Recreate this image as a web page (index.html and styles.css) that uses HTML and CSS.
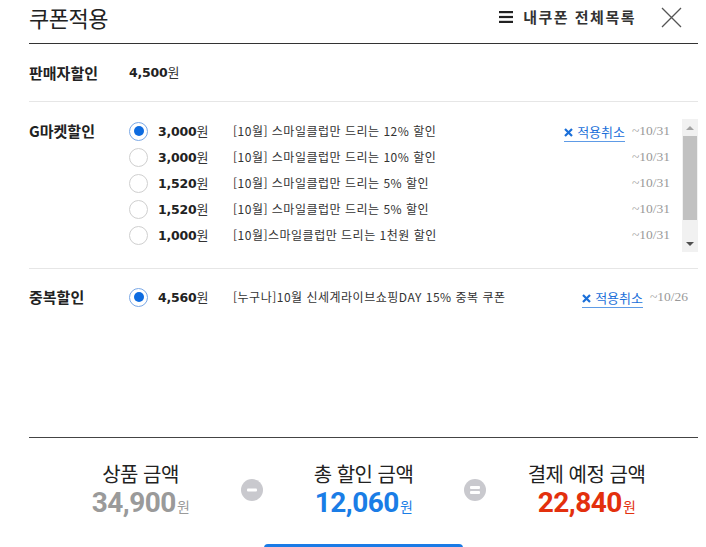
FILE: index.html
```html
<!DOCTYPE html>
<html lang="ko">
<head>
<meta charset="UTF-8">
<title>쿠폰적용</title>
<link rel="stylesheet" href="styles.css">
</head>
<body>
<div class="popup">

	<!-- 헤더 -->
	<div class="header">
		<h1 class="title">쿠폰적용</h1>
		<a class="my-coupons" href="#">
			<svg class="menu-icon" width="14" height="12" viewBox="0 0 14 12"><rect x="0" y="0" width="14" height="2.2" fill="#222"/><rect x="0" y="4.9" width="14" height="2.2" fill="#222"/><rect x="0" y="9.8" width="14" height="2.2" fill="#222"/></svg>
			내쿠폰 전체목록
		</a>
		<button class="close" type="button">
			<svg width="21" height="21" viewBox="0 0 21 21"><path d="M1 1 L20 20 M20 1 L1 20" stroke="#555" stroke-width="1.3" fill="none"/></svg>
		</button>
	</div>

	<!-- 판매자할인 -->
	<div class="row seller">
		<div class="label">판매자할인</div>
		<div class="amount"><b>4,500</b>원</div>
	</div>

	<!-- G마켓할인 -->
	<div class="row gmarket">
		<div class="label">G마켓할인</div>
		<div class="list-wrap">
			<ul class="coupons">
				<li class="coupon">
					<span class="radio checked"></span>
					<span class="amount"><b>3,000</b>원</span>
					<span class="name">[10월] 스마일클럽만 드리는 12% 할인</span>
					<a class="cancel" href="#"><svg width="9" height="9" viewBox="0 0 9 9"><path d="M1 1 L8 8 M8 1 L1 8" stroke="#1a6fd9" stroke-width="2.2"/></svg>적용취소</a>
					<span class="date">~10/31</span>
				</li>
				<li class="coupon">
					<span class="radio"></span>
					<span class="amount"><b>3,000</b>원</span>
					<span class="name">[10월] 스마일클럽만 드리는 10% 할인</span>
					<span class="date">~10/31</span>
				</li>
				<li class="coupon">
					<span class="radio"></span>
					<span class="amount"><b>1,520</b>원</span>
					<span class="name">[10월] 스마일클럽만 드리는 5% 할인</span>
					<span class="date">~10/31</span>
				</li>
				<li class="coupon">
					<span class="radio"></span>
					<span class="amount"><b>1,520</b>원</span>
					<span class="name">[10월] 스마일클럽만 드리는 5% 할인</span>
					<span class="date">~10/31</span>
				</li>
				<li class="coupon">
					<span class="radio"></span>
					<span class="amount"><b>1,000</b>원</span>
					<span class="name">[10월]스마일클럽만 드리는 1천원 할인</span>
					<span class="date">~10/31</span>
				</li>
			</ul>
			<!-- 스크롤바 -->
			<div class="scrollbar">
				<div class="sb-btn up"></div>
				<div class="sb-thumb"></div>
				<div class="sb-track"></div>
				<div class="sb-btn down"></div>
			</div>
		</div>
	</div>

	<!-- 중복할인 -->
	<div class="row dup">
		<div class="label">중복할인</div>
		<ul class="coupons">
			<li class="coupon">
				<span class="radio checked"></span>
				<span class="amount"><b>4,560</b>원</span>
				<span class="name">[누구나]10월 신세계라이브쇼핑DAY 15% 중복 쿠폰</span>
				<a class="cancel" href="#"><svg width="9" height="9" viewBox="0 0 9 9"><path d="M1 1 L8 8 M8 1 L1 8" stroke="#1a6fd9" stroke-width="2.2"/></svg>적용취소</a>
				<span class="date">~10/26</span>
			</li>
		</ul>
	</div>

	<!-- 합계 -->
	<div class="summary">
		<div class="sum-col">
			<div class="sum-label">상품 금액</div>
			<div class="sum-price gray">34,900<span>원</span></div>
		</div>
		<div class="op">
			<svg width="22" height="22" viewBox="0 0 22 22"><circle cx="11" cy="11" r="11" fill="#c9c9ce"/><rect x="6" y="9.5" width="10" height="3" rx="1" fill="#fff"/></svg>
		</div>
		<div class="sum-col">
			<div class="sum-label">총 할인 금액</div>
			<div class="sum-price blue">12,060<span>원</span></div>
		</div>
		<div class="op">
			<svg width="22" height="22" viewBox="0 0 22 22"><circle cx="11" cy="11" r="11" fill="#c9c9ce"/><rect x="6" y="7" width="10" height="3" rx="1" fill="#fff"/><rect x="6" y="12" width="10" height="3" rx="1" fill="#fff"/></svg>
		</div>
		<div class="sum-col">
			<div class="sum-label">결제 예정 금액</div>
			<div class="sum-price red">22,840<span>원</span></div>
		</div>
	</div>

	<div class="actions">
		<button class="apply" type="button">쿠폰적용</button>
	</div>
</div>
</body>
</html>
```

FILE: styles.css
```css
body {
  margin: 0;
  background: #fff;
  font-family: "Noto Sans CJK KR", "Noto Sans", sans-serif;
  color: #222;
}

ul {
  list-style: none;
  margin: 0;
  padding: 0;
}

.popup {
  padding: 0 8px 0 29px;
}

/* 헤더 */
.header {
  display: flex;
  align-items: center;
  height: 34px;
  padding-bottom: 9px;
  border-bottom: 1px solid #333;
}

.title {
  margin: 0;
  font-size: 22px;
  font-weight: 400;
  line-height: 26px;
  letter-spacing: -0.5px;
  flex: 1;
}

.my-coupons {
  display: flex;
  align-items: center;
  gap: 10px;
  font-size: 15px;
  font-weight: 700;
  letter-spacing: 1.5px;
  color: #333;
  text-decoration: none;
  line-height: 18px;
}

.close {
  border: none;
  background: none;
  padding: 0;
  margin: 0 16px 0 25px;
  width: 21px;
  height: 21px;
  cursor: pointer;
}
.close svg {
  display: block;
}

/* 행 */
.row {
  display: flex;
}

.label {
  width: 100px;
  font-size: 15px;
  font-weight: 700;
  line-height: 26px;
  color: #222;
}

.seller {
  align-items: center;
  height: 57px;
  border-bottom: 1px solid #e6e6e6;
}

.gmarket {
  padding: 16px 0 16px;
  border-bottom: 1px solid #e6e6e6;
}

.dup {
  height: 168px;
  box-sizing: border-box;
  padding-top: 15px;
}

.list-wrap {
  display: flex;
  flex: 1;
}

.coupons {
  flex: 1;
}

.dup .coupons {
  padding-right: 10px;
}

.coupon {
  display: flex;
  align-items: center;
  height: 26px;
}

.radio {
  box-sizing: border-box;
  width: 19px;
  height: 19px;
  border: 1px solid #cfcfcf;
  border-radius: 50%;
  background: #fff;
  margin-right: 10px;
  position: relative;
}
.radio.checked {
  border-color: #7aa8e6;
}
.radio.checked::after {
  content: "";
  position: absolute;
  left: 3.5px;
  top: 3.5px;
  width: 10px;
  height: 10px;
  border-radius: 50%;
  background: #0d6be0;
}

.amount {
  font-size: 13px;
  color: #333;
  line-height: 18px;
}
.coupon .amount {
  width: 75px;
}
.amount b {
  font-family: "DejaVu Sans", sans-serif;
  font-size: 12.5px;
  color: #222;
  letter-spacing: -0.2px;
}

.name {
  flex: 1;
  font-size: 12px;
  letter-spacing: 0.5px;
  color: #333;
  line-height: 18px;
}

.cancel {
  display: flex;
  align-items: center;
  gap: 4px;
  font-size: 13px;
  color: #1a6fd9;
  text-decoration: none;
  line-height: 18px;
  border-bottom: 1px solid #5e9be6;
  margin-top: 3px;
}

.date {
  width: 40px;
  margin-left: 5px;
  text-align: right;
  font-family: "Liberation Serif", serif;
  font-size: 13.5px;
  color: #999;
}

/* 스크롤바 */
.scrollbar {
  display: flex;
  flex-direction: column;
  width: 16px;
  height: 133px;
  margin: 1px 0 0 12px;
  background: #f1f1f1;
}
.sb-btn {
  height: 17px;
  display: flex;
  align-items: center;
  justify-content: center;
}
.sb-btn::before {
  content: "";
  border-left: 4px solid transparent;
  border-right: 4px solid transparent;
}
.sb-btn.up::before {
  border-bottom: 4px solid #a3a3a3;
}
.sb-btn.down::before {
  border-top: 4px solid #505050;
}
.sb-thumb {
  height: 84px;
  margin: 0 1px;
  background: #c1c1c1;
}
.sb-track {
  flex: 1;
}

/* 합계 */
.summary {
  display: flex;
  align-items: center;
  border-top: 1px solid #444;
  padding-top: 23px;
}

.sum-col {
  flex: 1;
  text-align: center;
}

.op {
  width: 22px;
  margin: 0 -11px;
  height: 22px;
  margin-top: -4px;
}
.op svg {
  display: block;
}

.sum-label {
  font-size: 20px;
  line-height: 25px;
  color: #222;
  letter-spacing: -0.5px;
}

.sum-price {
  font-family: Roboto, sans-serif;
  font-size: 28px;
  font-weight: 700;
  line-height: 33px;
  letter-spacing: -0.5px;
}
.sum-price span {
  font-family: "Noto Sans CJK KR", sans-serif;
  font-size: 14px;
  font-weight: 400;
  margin-left: 1px;
}
.gray {
  color: #9a9a9a;
}
.blue {
  color: #1a7de6;
}
.red {
  color: #e3300d;
}

.actions {
  display: flex;
  justify-content: center;
  margin-top: 21px;
}

.apply {
  width: 199px;
  height: 50px;
  border: none;
  border-radius: 4px;
  background: #1a7be6;
  color: #fff;
  font-family: "Noto Sans CJK KR", sans-serif;
  font-size: 16px;
  font-weight: 700;
  cursor: pointer;
}
```
